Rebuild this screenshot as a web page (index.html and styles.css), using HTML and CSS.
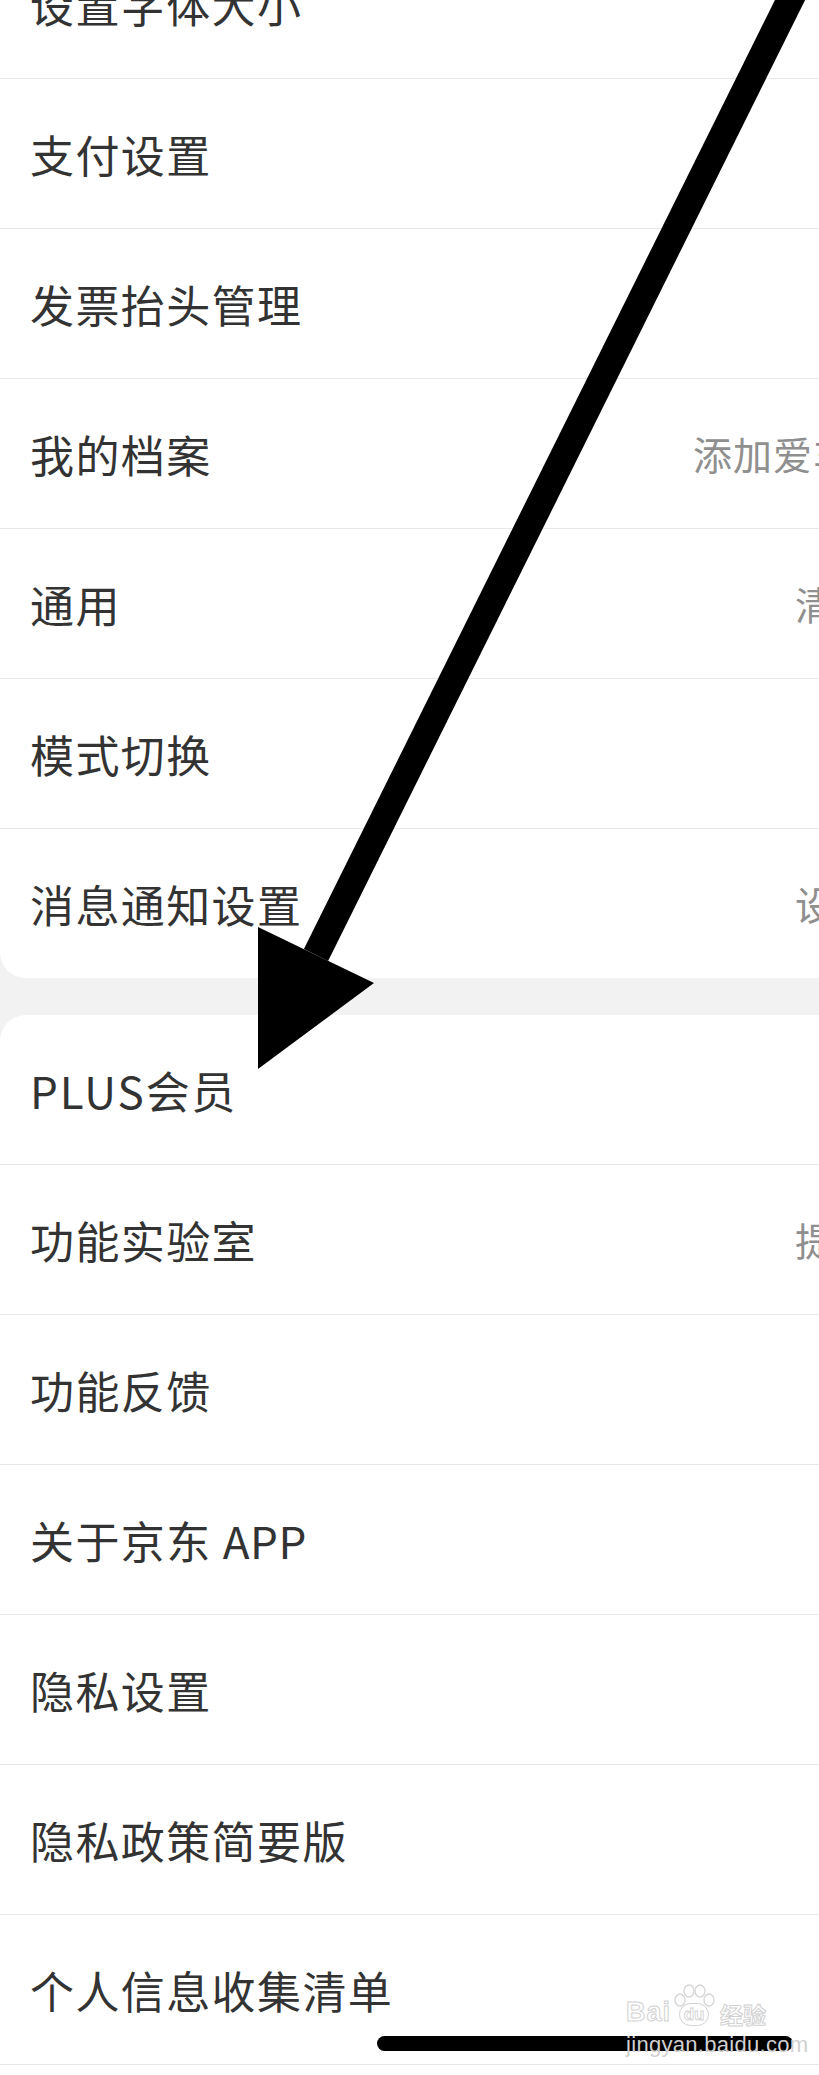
FILE: index.html
```html
<!DOCTYPE html>
<html lang="zh-CN">
<head>
<meta charset="utf-8">
<title>设置</title>
<link rel="stylesheet" href="styles.css">
</head>
<body>
<div class="page">
  <div class="card card-top">
    <div class="row"><span class="label">设置字体大小</span></div>
    <div class="row"><span class="label">支付设置</span></div>
    <div class="row"><span class="label">发票抬头管理</span></div>
    <div class="row"><span class="label">我的档案</span><span class="value">添加爱车</span></div>
    <div class="row"><span class="label">通用</span><span class="value narrow">清除缓存</span></div>
    <div class="row"><span class="label">模式切换</span></div>
    <div class="row last"><span class="label">消息通知设置</span><span class="value narrow">设置</span></div>
  </div>
  <div class="card card-bottom">
    <div class="row"><span class="label"><span class="latin">PLUS</span>会员</span></div>
    <div class="row"><span class="label">功能实验室</span><span class="value narrow">提前体验</span></div>
    <div class="row"><span class="label">功能反馈</span></div>
    <div class="row"><span class="label">关于京东 <span class="latin tight">APP</span></span></div>
    <div class="row"><span class="label">隐私设置</span></div>
    <div class="row"><span class="label">隐私政策简要版</span></div>
    <div class="row"><span class="label">个人信息收集清单</span></div>
    <div class="row"><span class="label">账号注销</span></div>
  </div>

  <svg class="arrow" width="819" height="1100" viewBox="0 0 819 1100" aria-hidden="true">
    <line x1="795" y1="-10" x2="316" y2="955" stroke="#000" stroke-width="27"/>
    <polygon points="258,927 374,983 258,1069" fill="#000"/>
  </svg>

  <div class="home-bar"></div>

  <div class="watermark">
    <div class="wm-logo">
      <span class="wm-bai">Bai</span>
      <span class="wm-du">
        <svg class="wm-paw" width="44" height="24" viewBox="0 0 44 24" aria-hidden="true">
          <ellipse cx="8" cy="16" rx="5" ry="6" fill="none" stroke="#d6d6d6" stroke-width="1.3"/>
          <ellipse cx="17" cy="7" rx="5" ry="6" fill="none" stroke="#d6d6d6" stroke-width="1.3"/>
          <ellipse cx="28" cy="7" rx="5" ry="6" fill="none" stroke="#d6d6d6" stroke-width="1.3"/>
          <ellipse cx="37" cy="16" rx="5" ry="6" fill="none" stroke="#d6d6d6" stroke-width="1.3"/>
        </svg>
        <span class="wm-du-text">du</span>
      </span>
      <span class="wm-jy">经验</span>
    </div>
    <div class="wm-url">jingyan.baidu.com</div>
  </div>
</div>
</body>
</html>
```

FILE: styles.css
```css
html, body {
  margin: 0;
  padding: 0;
}

body {
  background: #f2f2f2;
  font-family: "Noto Sans CJK SC", "Noto Sans", sans-serif;
}

.page {
  position: relative;
  width: 819px;
  height: 2075px;
  overflow: hidden;
  background: #f2f2f2;
}

.card {
  background: #ffffff;
  width: 1000px;
}

.card-top {
  margin-top: -71px;
  border-radius: 0 0 26px 26px;
}

.card-bottom {
  margin-top: 37px;
  border-radius: 26px 26px 0 0;
}

.row {
  display: flex;
  align-items: center;
  height: 149px;
  padding: 0 37px 0 30px;
  border-bottom: 1px solid #e8e8e8;
}

.row.last {
  border-bottom: none;
}

.label {
  font-size: 44px;
  line-height: 1;
  color: #333333;
  letter-spacing: 1.4px;
  white-space: nowrap;
}

.latin {
  letter-spacing: 2px;
}

.latin.tight {
  letter-spacing: 0.5px;
}

.value {
  margin-left: auto;
  width: 270px;
  font-size: 39px;
  line-height: 1;
  color: #8f8f8f;
  letter-spacing: 1px;
  white-space: nowrap;
}

.value.narrow {
  width: 168px;
}

.arrow {
  position: absolute;
  left: 0;
  top: 0;
  pointer-events: none;
}

.home-bar {
  position: absolute;
  left: 377px;
  top: 2036px;
  width: 416px;
  height: 15px;
  border-radius: 8px;
  background: #000000;
}

.watermark {
  position: absolute;
  left: 626px;
  top: 1984px;
  width: 150px;
  display: flex;
  flex-direction: column;
  align-items: flex-start;
  pointer-events: none;
}

.wm-logo {
  display: flex;
  align-items: flex-end;
  height: 42px;
}

.wm-bai,
.wm-du-text,
.wm-jy {
  font-family: "Liberation Sans", "Noto Sans CJK SC", sans-serif;
  font-weight: bold;
  color: transparent;
  -webkit-text-stroke: 1px #d2d2d2;
  line-height: 1;
}

.wm-bai {
  font-size: 27px;
  letter-spacing: 1px;
}

.wm-du {
  display: flex;
  flex-direction: column;
  align-items: center;
  margin-left: 1px;
}

.wm-paw {
  margin-bottom: -5px;
}

.wm-du-text {
  font-size: 17px;
  border: 1.3px solid #d2d2d2;
  border-radius: 12px;
  padding: 2px 4px;
  -webkit-text-stroke: 0.8px #d2d2d2;
}

.wm-jy {
  font-family: "Noto Sans CJK SC", sans-serif;
  font-size: 23px;
  margin-left: 4px;
}

.wm-url {
  margin-top: 8px;
  font-family: "Liberation Sans", sans-serif;
  font-size: 22px;
  line-height: 1;
  color: #d0d0d0;
  letter-spacing: 0.3px;
}
```
